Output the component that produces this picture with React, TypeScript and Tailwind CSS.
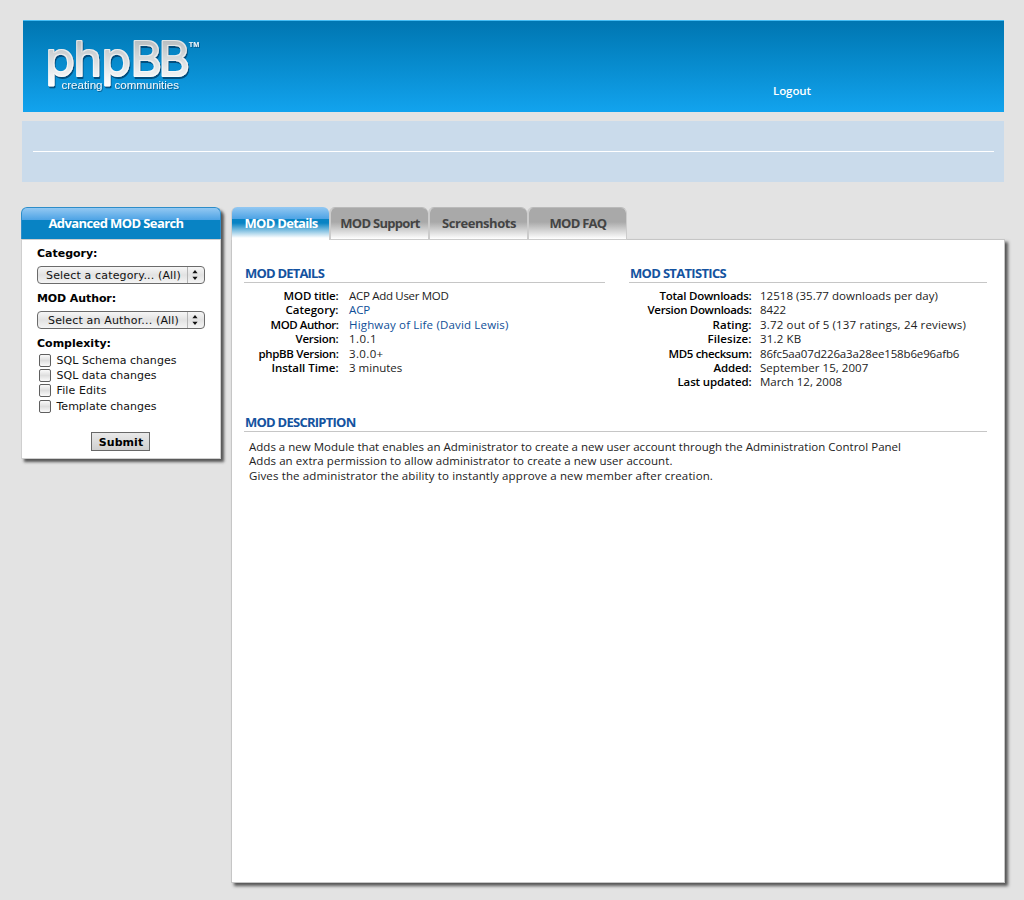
import { useLayoutEffect, useRef, useState } from "react";

/** Single line of text whose tracking is adjusted so that it spans `w` pixels. */
function Fit({ t, w, className = "" }: { t: string; w: number; className?: string }) {
  const ref = useRef<HTMLSpanElement>(null);
  const [spacing, setSpacing] = useState(0);
  useLayoutEffect(() => {
    if (ref.current) {
      const natural = ref.current.getBoundingClientRect().width;
      setSpacing((w - natural) / t.length);
    }
  }, [t, w]);
  return (
    <span ref={ref} className={`inline-block whitespace-nowrap ${className}`} style={{ letterSpacing: spacing }}>
      {t}
    </span>
  );
}

type Row = { label: string; lw: number; value: string; vw: number; link?: boolean };

const details: Row[] = [
  { label: "MOD title:", lw: 55, value: "ACP Add User MOD", vw: 99.5 },
  { label: "Category:", lw: 53, value: "ACP", vw: 21, link: true },
  { label: "MOD Author:", lw: 68, value: "Highway of Life (David Lewis)", vw: 159.5, link: true },
  { label: "Version:", lw: 43, value: "1.0.1", vw: 28 },
  { label: "phpBB Version:", lw: 80, value: "3.0.0+", vw: 34.5 },
  { label: "Install Time:", lw: 67, value: "3 minutes", vw: 53.3 },
];

const statistics: Row[] = [
  { label: "Total Downloads:", lw: 92, value: "12518 (35.77 downloads per day)", vw: 178 },
  { label: "Version Downloads:", lw: 104, value: "8422", vw: 26 },
  { label: "Rating:", lw: 39, value: "3.72 out of 5 (137 ratings, 24 reviews)", vw: 206 },
  { label: "Filesize:", lw: 44, value: "31.2 KB", vw: 41.3 },
  { label: "MD5 checksum:", lw: 83, value: "86fc5aa07d226a3a28ee158b6e96afb6", vw: 199.3 },
  { label: "Added:", lw: 38, value: "September 15, 2007", vw: 108.3 },
  { label: "Last updated:", lw: 74, value: "March 12, 2008", vw: 82 },
];

const tabs = [
  { t: "MOD Support", w: 79.5 },
  { t: "Screenshots", w: 74 },
  { t: "MOD FAQ", w: 57 },
];

const checks = [
  { t: "SQL Schema changes", w: 120 },
  { t: "SQL data changes", w: 100 },
  { t: "File Edits", w: 50 },
  { t: "Template changes", w: 100 },
];

function Logo() {
  return (
    <svg width="170" height="70" viewBox="40 30 170 70" className="block">
      <defs>
        <linearGradient id="silver" gradientUnits="userSpaceOnUse" x1="0" y1="38" x2="0" y2="88">
          <stop offset="0" stopColor="#b4babd" />
          <stop offset="0.4" stopColor="#d6dadc" />
          <stop offset="0.8" stopColor="#f4f6f7" />
          <stop offset="1" stopColor="#ffffff" />
        </linearGradient>
        <filter id="drop" x="-10%" y="-10%" width="120%" height="130%">
          <feMorphology in="SourceAlpha" operator="erode" radius="0.6" result="inner" />
          <feComposite in="SourceAlpha" in2="inner" operator="out" result="rim" />
          <feFlood floodColor="#ffffff" floodOpacity="0.55" />
          <feComposite in2="rim" operator="in" result="light" />
          <feGaussianBlur in="SourceAlpha" stdDeviation="0.7" />
          <feOffset dx="1" dy="1.5" result="blur" />
          <feFlood floodColor="#003a63" floodOpacity="0.75" />
          <feComposite in2="blur" operator="in" result="shadow" />
          <feMerge>
            <feMergeNode in="shadow" />
            <feMergeNode in="SourceGraphic" />
            <feMergeNode in="light" />
          </feMerge>
        </filter>
        <filter id="soft" x="-10%" y="-20%" width="120%" height="160%">
          <feDropShadow dx="0.8" dy="1" stdDeviation="0.5" floodColor="#003a63" floodOpacity="0.7" />
        </filter>
      </defs>
      <g filter="url(#drop)">
        <text
          x="45.6 73.6 101.6 130.6 158.6"
          y="76"
          fontFamily="Inter, sans-serif"
          fontWeight="400"
          fontSize="48"
          fill="url(#silver)"
          stroke="url(#silver)"
          strokeWidth="2"
          strokeLinejoin="round"
        >
          phpBB
        </text>
      </g>
      <g fontFamily="Liberation Sans, sans-serif" fill="#eef6fb" filter="url(#soft)">
        <text x="61.5" y="89" fontSize="10.5" textLength="41" lengthAdjust="spacingAndGlyphs">creating</text>
        <text x="114.5" y="89" fontSize="10.5" textLength="64.5" lengthAdjust="spacingAndGlyphs">communities</text>
        <text x="188.8" y="47" fontSize="8" fontWeight="bold" textLength="10.5" lengthAdjust="spacingAndGlyphs">TM</text>
      </g>
    </svg>
  );
}

function Dropdown({ t, w }: { t: string; w: number }) {
  return (
    <div className="flex h-[18px] w-[168px] items-stretch rounded-[4px] border border-[#6b6b6b] bg-linear-to-b from-[#f6f6f6] via-[#e2e2e2] to-[#f4f4f4]">
      <div className="flex w-[149px] items-center justify-center pt-px pl-[2px] text-[11px] leading-4 text-[#111]">
        <Fit t={t} w={w} />
      </div>
      <div className="flex flex-1 items-center justify-center border-l border-[#b5b5b5] pr-[2px]">
        <svg width="6" height="10" viewBox="0 0 6 10">
          <path d="M3 0L5.6 3.2H.4zM3 10L.4 6.8h5.2z" fill="#111" />
        </svg>
      </div>
    </div>
  );
}

function Heading({ t, w }: { t: string; w: number }) {
  return (
    <h2 className="h-[20px] border-b border-[#c6c6c6] pt-px pl-px text-[13px] leading-[19px] font-bold text-[#1453a0]">
      <Fit t={t} w={w} />
    </h2>
  );
}

function Table({ rows, labelClass }: { rows: Row[]; labelClass: string }) {
  return (
    <div className="mt-[6px] text-[11.5px] leading-[14.4px]">
      {rows.map((r) => (
        <div key={r.label} className="flex h-[14.4px]">
          <div className={`text-right font-semibold text-black ${labelClass}`}>
            <Fit t={r.label} w={r.lw} />
          </div>
          <div className={r.link ? "text-[#0f4f98]" : "text-[#222]"}>
            <Fit t={r.value} w={r.vw} />
          </div>
        </div>
      ))}
    </div>
  );
}

export default function App() {
  return (
    <div className="h-[900px] w-[1024px] overflow-hidden bg-[#e3e3e3] pt-5 font-['Open_Sans',sans-serif]">
      <header className="ml-[23px] flex h-[92px] w-[981px] border-t border-[#45bdf5] bg-linear-to-b from-[#0076b1] to-[#12a3ee]">
        <div className="mt-[9px] ml-[17px] w-[733px]">
          <Logo />
        </div>
        <a className="mt-[62px] text-[11.5px] leading-4 font-semibold text-white">
          <Fit t="Logout" w={38} />
        </a>
      </header>

      <div className="mt-[9px] ml-[22px] h-[61px] w-[982px] bg-[#cadbeb] px-[11px] pt-[30px]">
        <div className="mr-[-1px] h-px bg-white" />
      </div>

      <div className="mt-[25px] ml-[21px] flex items-start">
        <aside className="h-[252px] w-[200px] rounded-t-[6px] bg-white font-['DejaVu_Sans',sans-serif] shadow-[3px_3px_3px_#555]">
          <div className="flex h-[32px] items-center justify-center rounded-t-[6px] border-x border-t border-[#2d8dc9] bg-[linear-gradient(to_bottom,#93c8f2_0px,#4da3e5_12px,#0883c4_12px,#0883c4_100%)] pr-[10px] pb-px font-['Open_Sans',sans-serif] text-[13px] leading-5 font-bold text-white">
            <Fit t="Advanced MOD Search" w={135} />
          </div>
          <div className="h-[220px] border border-[#cfcfcf] pt-[6px] pl-[15px] text-[11px] leading-4 text-[#111]">
            <div className="font-bold text-black"><Fit t="Category:" w={60.5} /></div>
            <div className="mt-[4px]"><Dropdown t="Select a category... (All)" w={135} /></div>
            <div className="mt-[7px] font-bold text-black"><Fit t="MOD Author:" w={79} /></div>
            <div className="mt-[4px]"><Dropdown t="Select an Author... (All)" w={131} /></div>
            <div className="mt-[7px] font-bold text-black"><Fit t="Complexity:" w={74} /></div>
            <div className="mt-px">
              {checks.map((c) => (
                <div key={c.t} className="flex h-[15.3px] items-center">
                  <span className="mr-[5.5px] mb-px ml-[2px] h-[13px] w-[12px] rounded-[2px] border border-[#5f5f5f] bg-linear-to-b from-[#fafafa] via-[#dedede] to-[#fafafa]" />
                  <Fit t={c.t} w={c.w} />
                </div>
              ))}
            </div>
            <button className="mt-[18px] ml-[54px] flex h-[19px] w-[59px] items-center justify-center border border-[#686868] bg-linear-to-b from-[#e9e9e9] to-[#cfcfcf] pt-[2px] pl-px font-bold text-black">
              <Fit t="Submit" w={44.5} />
            </button>
          </div>
        </aside>

        <main className="ml-[10px] w-[774px]">
          <nav className="relative z-10 -mb-px flex h-[33px] items-start text-[13px] leading-5 font-bold">
            <div className="flex h-[33px] w-[98px] items-center justify-center rounded-t-[6px] border-l border-[#cfcfcf] bg-[linear-gradient(to_bottom,#93c8f2_0px,#4da3e5_12px,#0883c4_12px,#0883c4_16px,#ffffff_31px)] pb-px pl-px text-white">
              <Fit t="MOD Details" w={73} />
            </div>
            {tabs.map((tab) => (
              <div
                key={tab.t}
                className="flex h-[33px] w-[99px] items-center justify-center rounded-t-[6px] border border-t-[#bababa] border-r-0 border-l-2 border-[#cccccc] bg-[linear-gradient(to_bottom,#a9a9a9_0px,#a9a9a9_14px,#ffffff_31px)] bg-clip-padding pb-px pl-px text-[#444] last:w-[100px] last:border-r"
              >
                <Fit t={tab.t} w={tab.w} />
              </div>
            ))}
          </nav>
          <section className="h-[644px] border border-[#c6c6c6] bg-white pl-[12px] shadow-[3px_3px_3px_#555]">
            <div className="flex pt-[23px]">
              <div className="w-[361px]">
                <Heading t="MOD DETAILS" w={79} />
                <Table rows={details} labelClass="w-[94.5px] mr-[10.5px]" />
              </div>
              <div className="ml-[24px] w-[358px]">
                <Heading t="MOD STATISTICS" w={96} />
                <Table rows={statistics} labelClass="w-[122.5px] mr-[8.5px]" />
              </div>
            </div>
            <div className="mt-[22px] w-[743px]">
              <Heading t="MOD DESCRIPTION" w={110.5} />
              <div className="mt-[8px] ml-[5px] flex flex-col text-[11.5px] leading-[14.4px] text-[#222]">
                <div><Fit t="Adds a new Module that enables an Administrator to create a new user account through the Administration Control Panel" w={652} /></div>
                <div><Fit t="Adds an extra permission to allow administrator to create a new user account." w={423.5} /></div>
                <div><Fit t="Gives the administrator the ability to instantly approve a new member after creation." w={464} /></div>
              </div>
            </div>
          </section>
        </main>
      </div>
    </div>
  );
}
